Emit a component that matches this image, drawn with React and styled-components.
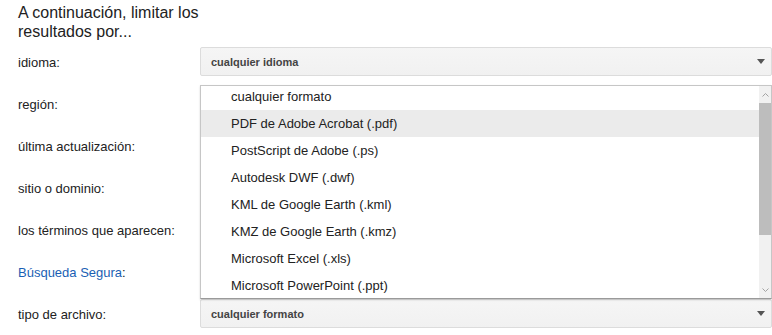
import React from "react";
import styled, { createGlobalStyle } from "styled-components";

const Global = createGlobalStyle`
  html, body { margin: 0; padding: 0; background: #fff; }
  body { font-family: "Liberation Sans", Arial, sans-serif; color: #222; }
`;

const Page = styled.div`
  width: 772px;
`;

const Heading = styled.div`
  width: 186px;
  padding: 3px 0 0 18px;
  font-size: 16px;
  line-height: 19px;
  color: #222;
  height: 38px;
`;

const Form = styled.div`
  display: grid;
  grid-template-columns: 200px 1fr;
  grid-auto-rows: 42px;
  align-items: center;
`;

const Label = styled.div`
  padding-left: 18px;
  font-size: 13px;
  color: ${(p) => (p.$link ? "#1a5fb4" : "#222")};
  span { color: #222; }
`;

const Field = styled.div`
  position: relative;
  align-self: start;
  margin-top: 6px;
`;

const SelectBox = styled.div`
  box-sizing: border-box;
  height: 29px;
  border: 1px solid #dcdcdc;
  border-radius: 2px;
  background: linear-gradient(#f5f5f5, #f1f1f1);
  display: flex;
  align-items: center;
  justify-content: space-between;
  padding: 0 6px 0 10px;
  font-size: 11px;
  font-weight: bold;
  color: #444;
`;

const TextInput = styled.div`
  box-sizing: border-box;
  height: 29px;
  border: 1px solid #d9d9d9;
  border-top-color: #c0c0c0;
  background: #fff;
`;

const Arrow = () => (
  <svg width="8" height="5" viewBox="0 0 8 5">
    <path d="M0 0h8L4 5z" fill="#555" />
  </svg>
);

const Listbox = styled.div`
  position: absolute;
  left: 0;
  right: 0;
  bottom: 100%;
  height: 214px;
  box-sizing: border-box;
  background: #fff;
  border: 1px solid #c6c6c6;
  border-bottom-color: #9a9a9a;
  box-shadow: 0 1px 2px rgba(0, 0, 0, 0.15);
  display: flex;
  z-index: 2;
`;

const Options = styled.div`
  flex: 1;
  overflow: hidden;
`;

const OptionList = styled.div`
  margin-top: -3px;
`;

const Option = styled.div`
  height: 27px;
  line-height: 27px;
  padding-left: 30px;
  font-size: 13px;
  color: #222;
  background: ${(p) => (p.$active ? "#ebebeb" : "transparent")};
  white-space: nowrap;
`;

const Scrollbar = styled.div`
  width: 12px;
  background: #f1f1f1;
  display: flex;
  flex-direction: column;
`;

const ScrollBtn = styled.div`
  height: ${(p) => p.$h}px;
  display: flex;
  align-items: center;
  justify-content: center;
`;

const Thumb = styled.div`
  height: 132px;
  background: #bdbdbd;
`;

const Spacer = styled.div`
  flex: 1;
`;

const Chevron = ({ up }) => (
  <svg width="7" height="4" viewBox="0 0 7 4">
    <path
      d={up ? "M0.5 3.5L3.5 0.5L6.5 3.5" : "M0.5 0.5L3.5 3.5L6.5 0.5"}
      fill="none"
      stroke="#a3a3a3"
      strokeWidth="1"
    />
  </svg>
);

const formats = [
  "cualquier formato",
  "PDF de Adobe Acrobat (.pdf)",
  "PostScript de Adobe (.ps)",
  "Autodesk DWF (.dwf)",
  "KML de Google Earth (.kml)",
  "KMZ de Google Earth (.kmz)",
  "Microsoft Excel (.xls)",
  "Microsoft PowerPoint (.ppt)",
];

const Select = ({ value }) => (
  <SelectBox>
    <span>{value}</span>
    <Arrow />
  </SelectBox>
);

export default function App() {
  return (
    <Page>
      <Global />
      <Heading>A continuación, limitar los resultados por...</Heading>
      <Form>
        <Label>idioma:</Label>
        <Field>
          <Select value="cualquier idioma" />
        </Field>

        <Label>región:</Label>
        <Field>
          <Select />
        </Field>

        <Label>última actualización:</Label>
        <Field>
          <Select />
        </Field>

        <Label>sitio o dominio:</Label>
        <Field>
          <TextInput />
        </Field>

        <Label>los términos que aparecen:</Label>
        <Field>
          <Select />
        </Field>

        <Label $link>
          Búsqueda Segura<span>:</span>
        </Label>
        <Field>
          <Select />
        </Field>

        <Label>tipo de archivo:</Label>
        <Field>
          <Listbox>
            <Options>
              <OptionList>
                {formats.map((f, i) => (
                  <Option key={f} $active={i === 1}>
                    {f}
                  </Option>
                ))}
              </OptionList>
            </Options>
            <Scrollbar>
              <ScrollBtn $h={17}>
                <Chevron up />
              </ScrollBtn>
              <Thumb />
              <Spacer />
              <ScrollBtn $h={16}>
                <Chevron />
              </ScrollBtn>
            </Scrollbar>
          </Listbox>
          <Select value="cualquier formato" />
        </Field>
      </Form>
    </Page>
  );
}
